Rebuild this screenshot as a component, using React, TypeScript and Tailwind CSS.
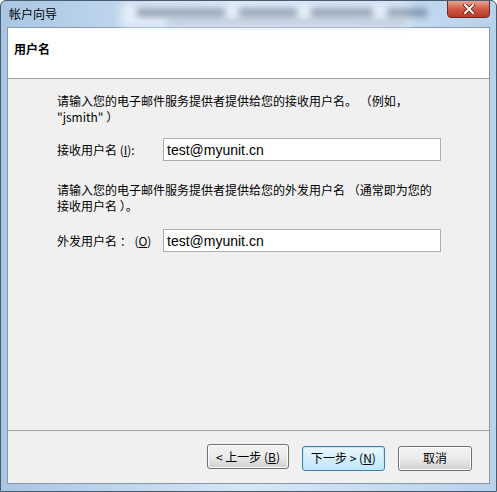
import React from "react";

const cjk = { fontFamily: '"Noto Sans CJK SC", "Liberation Sans", sans-serif' };

function WizardButton({
  children,
  focused = false,
  width,
}: {
  children: React.ReactNode;
  focused?: boolean;
  width: string;
}) {
  return (
    <button
      className={
        (focused
          ? "h-[25px] rounded-[3px] border border-[#3c7fb1] bg-gradient-to-b from-[#eaf6fd] to-[#bee6fd] text-[12px] text-black shadow-[inset_0_0_0_1px_#c4e5f6] "
          : "h-[25px] rounded-[3px] border border-[#707070] bg-gradient-to-b from-[#f2f2f2] via-[#ebebeb] to-[#cfcfcf] text-[12px] text-black shadow-[inset_0_0_0_1px_#fcfcfc] ") +
        width
      }
      style={cjk}
    >
      {children}
    </button>
  );
}

export default function App() {
  return (
    <div
      className="relative flex h-[492px] w-[497px] flex-col overflow-hidden rounded-t-[6px] border border-[#4a5b6e] bg-gradient-to-r from-[#a9c6e4] via-[#d6e6f5] to-[#b8d2ec]"
      style={cjk}
    >
      {/* Title bar */}
      <div className="relative flex h-[26px] shrink-0 items-center pl-[8px]">
        <span className="text-[12px] text-black">帐户向导</span>
        {/* blurred background window text */}
        <div className="pointer-events-none absolute left-[120px] top-[2px] h-[24px] w-[290px] bg-[#e4eef8] blur-[4px]" />
        <div className="pointer-events-none absolute left-[136px] top-[7px] flex flex-col gap-[3px] opacity-45 blur-[3px]">
          <div className="flex gap-[14px]">
            <span className="h-[9px] w-[88px] bg-[#3a4f6a]" />
            <span className="h-[9px] w-[58px] bg-[#3a4f6a]" />
            <span className="h-[9px] w-[62px] bg-[#3a4f6a]" />
            <span className="h-[9px] w-[40px] bg-[#3a4f6a]" />
          </div>
          <div className="ml-[30px] h-[4px] w-[240px] bg-[#6b7f99]" />
        </div>
        {/* Close button */}
        <div className="absolute right-[6px] top-[-1px] flex h-[18px] w-[43px] items-center justify-center rounded-b-[4px] border border-[#6b2a22] bg-gradient-to-b from-[#e8a493] via-[#cf5a45] to-[#b83a25]">
          <svg width="12" height="10" viewBox="0 0 12 10">
            <path
              d="M2 1 L10 9 M10 1 L2 9"
              stroke="#5a1a10"
              strokeWidth="3.4"
              strokeLinecap="square"
            />
            <path
              d="M2 1 L10 9 M10 1 L2 9"
              stroke="#ffffff"
              strokeWidth="2"
              strokeLinecap="square"
            />
          </svg>
        </div>
      </div>

      {/* Client area */}
      <div className="mx-[6px] flex h-[457px] flex-col border border-[#8a99aa] bg-[#f0f0f0]">
        {/* Header */}
        <div className="h-[51px] shrink-0 border-b border-[#a0a0a0] bg-white pl-[6px] pt-[7px]">
          <span className="text-[12px] font-bold text-black">用户名</span>
        </div>

        {/* Body */}
        <div className="flex flex-1 flex-col pl-[49px] pr-[42px] pt-[14px] text-[12px] leading-[16px] text-black">
          <p>
            请输入您的电子邮件服务提供者提供给您的接收用户名。 （例如，
            <br />
            "jsmith" ）
          </p>
          <div className="mt-[13px] flex items-center">
            <span className="w-[106px]">
              接收用户名 (<span className="underline">I</span>):
            </span>
            <div
              className="flex h-[23px] w-[278px] items-center border border-[#abadb3] bg-white pl-[3px] text-[14px]"
              style={{ fontFamily: '"Liberation Sans", Arial, sans-serif' }}
            >
              test@myunit.cn
            </div>
          </div>
          <p className="mt-[21px]">
            请输入您的电子邮件服务提供者提供给您的外发用户名 （通常即为您的
            <br />
            接收用户名 ）。
          </p>
          <div className="mt-[15px] flex items-center">
            <span className="w-[106px]">
              外发用户名 ： (<span className="underline">O</span>)
            </span>
            <div
              className="flex h-[23px] w-[278px] items-center border border-[#abadb3] bg-white pl-[3px] text-[14px]"
              style={{ fontFamily: '"Liberation Sans", Arial, sans-serif' }}
            >
              test@myunit.cn
            </div>
          </div>
        </div>

        {/* Footer */}
        <div className="flex h-[53px] shrink-0 items-start justify-end border-t border-[#a0a0a0] pr-[17px] pt-[13px]">
          <div className="flex">
            <WizardButton width="w-[82px]">
              &lt; 上一步 (<span className="underline">B</span>)
            </WizardButton>
            <div className="ml-[13px]">
              <WizardButton focused width="w-[83px]">
                下一步 &gt; (<span className="underline">N</span>)
              </WizardButton>
            </div>
            <div className="ml-[13px]">
              <WizardButton width="w-[74px]">取消</WizardButton>
            </div>
          </div>
        </div>
      </div>
    </div>
  );
}
